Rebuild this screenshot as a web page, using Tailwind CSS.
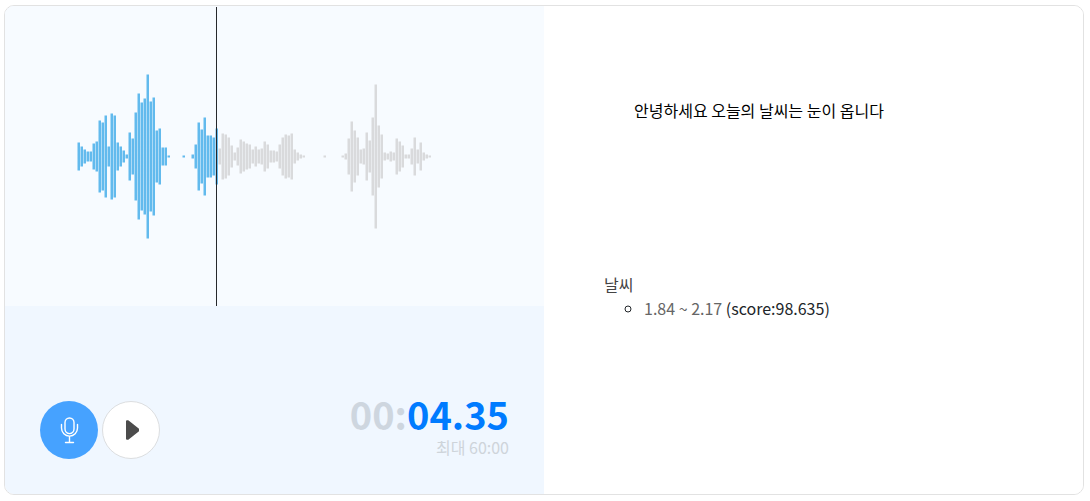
<!DOCTYPE html>
<html lang="ko">
  <head>
    <meta charset="UTF-8" />
    <meta name="viewport" content="width=device-width, initial-scale=1.0" />
    <title>음성 인식</title>
    <script src="https://cdn.jsdelivr.net/npm/@tailwindcss/browser@4"></script>
  </head>
  <body class="bg-white px-1 py-[5px] pr-[6px] font-['Noto_Sans_CJK_SC',sans-serif] text-base text-[#212529] [font-feature-settings:'locl'_0]">
    <main class="grid grid-cols-2 overflow-hidden rounded-[10px] border border-[#e2e2e2]">
      <!-- Recorder -->
      <section class="flex flex-col bg-[#f0f7ff]">
        <div class="h-[300px] bg-[#f7fbff]">
          <svg id="waveform" class="block h-full w-full" viewBox="0 0 539 300" preserveAspectRatio="xMinYMid meet" role="img" aria-label="음성 파형">
            <path id="played" fill="none" stroke="#62baed" stroke-width="2.5" />
            <path id="remaining" fill="none" stroke="#d9dadc" stroke-width="2.5" />
            <path d="M211.5 1V300" stroke="#26282c" stroke-width="1" />
          </svg>
        </div>

        <div class="flex items-end justify-between px-[35px] pt-[85px] pb-[35px]">
          <div class="flex gap-1">
            <button type="button" aria-label="녹음" class="flex size-[58px] items-center justify-center rounded-full bg-[#46a2ff] hover:bg-blue-500">
              <svg class="h-7 w-5" viewBox="0 0 20 28" fill="none" stroke="#fff" stroke-width="1.4" stroke-linecap="round">
                <rect x="6" y="2" width="9" height="15.6" rx="4.5" />
                <path d="M2.5 8.5v3.6a8 8 0 0 0 16 0V8.5M10.5 20.3v6M6.5 26.5h8" />
              </svg>
            </button>
            <button type="button" aria-label="재생" class="flex size-[58px] items-center justify-center rounded-full border border-[#dcdee0] bg-white hover:bg-gray-50">
              <svg class="h-5 w-4" viewBox="0 0 16 20" fill="#4c4c4c" stroke="#4c4c4c" stroke-width="2" stroke-linejoin="round">
                <path d="M4 1.2h1L16 10 5 18.8H4z" />
              </svg>
            </button>
          </div>
          <div class="pb-0.5 text-right">
            <p class="text-[38px] leading-[46px] font-bold text-[#ced6df]">00:<span class="text-[#007bff]">04.35</span></p>
            <p class="leading-5 text-[#ced4da]">최대 60:00</p>
          </div>
        </div>
      </section>

      <!-- Recognition result -->
      <section class="bg-white px-[60px] pt-[92px]">
        <p class="h-[174px] px-[30px] leading-6 text-black">안녕하세요 오늘의 날씨는 눈이 옵니다</p>
        <p class="leading-6 text-[#444]">날씨</p>
        <ul class="list-[circle] pl-10 leading-6">
          <li><a href="#waveform" class="text-[#666] hover:underline">1.84 ~ 2.17</a> (score:98.635)</li>
        </ul>
      </section>
    </main>

    <script>
      const levels = [
        29, 21, 15, 11, 11, 27, 31, 73, 69, 83, 21, 87, 83, 29, 21, 13, 5, 49, 37, 89,
        127, 109, 117, 165, 111, 119, 53, 57, 19, 19, 3, 0, 0, 0, 0, 3, 0, 0, 5, 25,
        69, 55, 79, 43, 43, 39, 57, 17, 47, 45, 39, 23, 9, 19, 35, 31, 27, 25, 15, 21,
        15, 17, 31, 25, 13, 13, 11, 25, 39, 45, 43, 47, 15, 9, 5, 3, 0, 0, 0, 0,
        0, 0, 3, 0, 0, 0, 0, 0, 3, 7, 37, 71, 53, 39, 15, 17, 49, 33, 79, 145,
        63, 45, 9, 7, 11, 9, 37, 31, 23, 5, 5, 17, 39, 15, 29, 9, 5, 3,
      ];
      const playedCount = 47;

      // One vertical stroke for each level, centred on the middle line
      function drawBars(id, from, to) {
        let d = "";
        for (let i = from; i < to; i++) {
          if (!levels[i]) continue;
          const half = (levels[i] - 1) / 2;
          d += `M${73.75 + i * 3} ${150.5 - half}v${half * 2}`;
        }
        document.getElementById(id).setAttribute("d", d);
      }

      drawBars("played", 0, playedCount);
      drawBars("remaining", playedCount, levels.length);
    </script>
  </body>
</html>
